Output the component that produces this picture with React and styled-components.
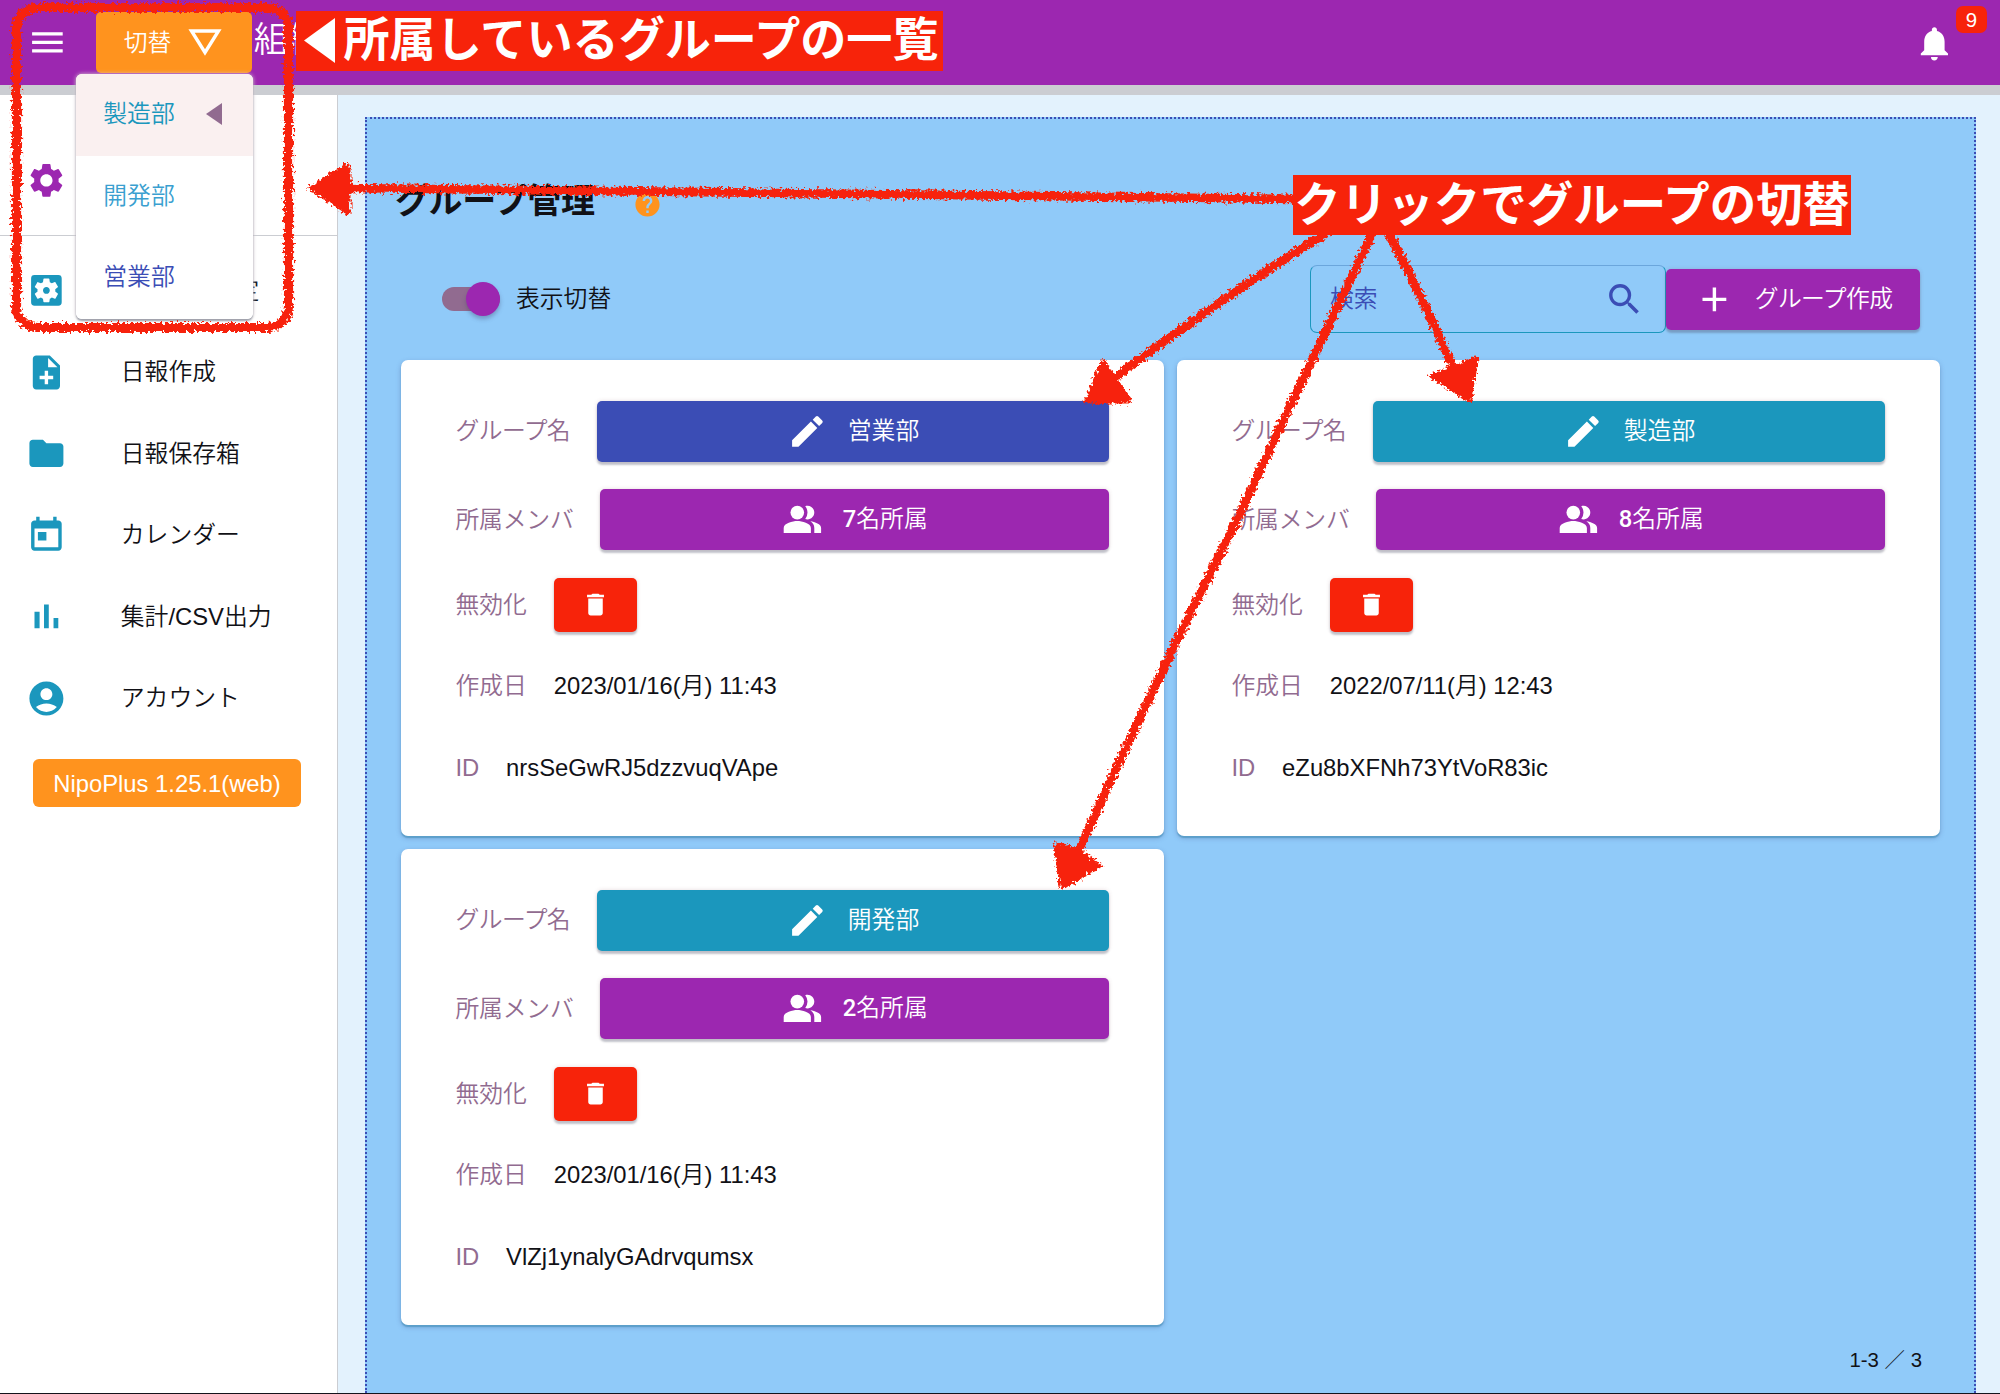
import React from "react";
import styled, { createGlobalStyle } from "styled-components";
import {
  MdMenu, MdSettings, MdSettingsApplications, MdNoteAdd, MdFolder,
  MdAccountCircle, MdNotifications, MdHelp, MdSearch, MdAdd, MdEdit, MdPeopleAlt, MdDelete,
} from "react-icons/md";

const c = {
  purple: "#9c27b0", orange: "#ff931e", teal: "#1b97bd", indigo: "#3b4db5",
  red: "#f7230a", mauve: "#916b90", panel: "#90caf9", pale: "#e3f2fd", ink: "#111116",
};

const Global = createGlobalStyle`
  * { box-sizing: border-box; }
  body {
    margin: 0;
    overflow: hidden;
    color: ${c.ink};
    font: 350 23.8px/1.5 "Liberation Sans", "Noto Sans CJK JP", sans-serif;
  }
`;

const Page = styled.div`
  position: relative;
  display: flex;
  flex-direction: column;
  width: 2000px;
  height: 1394px;
  overflow: hidden;
  border-bottom: 1.5px solid #14141c;
  background: ${c.pale};
`;

const Header = styled.header`
  position: relative;
  z-index: 2;
  display: flex;
  align-items: flex-start;
  flex: none;
  height: 85px;
  padding-left: 27px;
  background: ${c.purple};
  box-shadow: 0 10px 0 #cbcdd2;
  color: #fff;
`;

const MenuIcon = styled(MdMenu)`
  margin-top: 22px;
  font-size: 40.8px;
`;

const Switcher = styled.div`
  position: relative;
  margin-left: 28px;
`;

const SwitchButton = styled.div`
  display: flex;
  align-items: center;
  gap: 17px;
  width: 156px;
  height: 61px;
  margin-top: 12px;
  padding-left: 28px;
  border-radius: 5px;
  background: ${c.orange};

  svg { margin-top: -2px; }
`;

const GroupMenu = styled.div`
  position: absolute;
  top: 74px;
  right: -1px;
  width: 177px;
  overflow: hidden;
  border-radius: 6px;
  background: #fff;
  box-shadow: 0 2px 2px #9da0aa, 0 0 4px #d8cdd2;
`;

const GroupOption = styled.div`
  display: flex;
  align-items: center;
  gap: 31px;
  height: 81.5px;
  padding: 0 0 1px 27.5px;
  background: ${(p) => (p.$active ? "#faf0f0" : "#fff")};
  color: ${(p) => p.$color};
`;

const Title = styled.div`
  margin: 13px 0 0 2px;
  font-size: 35.7px;
  line-height: 54px;
`;

const BellArea = styled.div`
  display: flex;
  align-items: flex-start;
  gap: 1px;
  margin-left: auto;
  padding: 5.5px 13px 0 0;
`;

const Bell = styled(MdNotifications)`
  margin-top: 17px;
  font-size: 40.8px;
`;

const Badge = styled.span`
  width: 31px;
  height: 27px;
  border-radius: 7px;
  background: ${c.red};
  font-size: 20.4px;
  line-height: 28px;
  text-align: center;
`;

const Body = styled.div`
  display: flex;
  flex: 1;
  min-height: 0;
`;

const Sidebar = styled.nav`
  flex: none;
  width: 338px;
  border-right: 1.5px solid #cbcdd2;
  background: #fff;
`;

const SideTop = styled.div`
  height: 151px;
  padding: 75px 0 0 26px;
  border-bottom: 1.5px solid #cbcdd2;
  color: ${c.purple};
  font-size: 40.8px;
  line-height: 0;
`;

const SideList = styled.div`
  padding-top: 14px;
`;

const SideItem = styled.div`
  display: flex;
  align-items: center;
  height: 81.5px;
  padding-left: 26px;
  gap: ${(p) => (p.$indented ? "145px" : "54px")};

  svg {
    flex: none;
    color: ${c.teal};
    font-size: 40.8px;
  }
`;

const Version = styled.div`
  width: 268px;
  height: 48px;
  margin: 20px 0 0 33px;
  border-radius: 6px;
  background: ${c.orange};
  color: #fff;
  line-height: 49px;
  text-align: center;
`;

const Main = styled.main`
  display: flex;
  flex: 1;
  padding: 32px 26px 0 27px;
`;

const Panel = styled.section`
  display: flex;
  flex-direction: column;
  flex: 1;
  padding: 0 34px;
  border: 2px dotted ${c.indigo};
  border-bottom: 0;
  background: ${c.panel};
`;

const Heading = styled.h1`
  display: flex;
  align-items: center;
  gap: 38px;
  height: 60px;
  margin: 52px 0 0 -6px;
  font-size: 34px;
  font-weight: 700;
  letter-spacing: -0.4px;
`;

const Help = styled(MdHelp)`
  margin-top: 7px;
  color: ${c.orange};
  font-size: 29px;
`;

const Toolbar = styled.div`
  display: flex;
  align-items: center;
  height: 68px;
  margin-top: 34px;
  padding: 0 20px 0 41px;
`;

const Toggle = styled.div`
  display: flex;
  justify-content: flex-end;
  align-items: center;
  width: 58px;
  height: 24px;
  margin-right: 16px;
  border-radius: 12px;
  background: ${c.mauve};
`;

const Knob = styled.i`
  width: 34px;
  height: 34px;
  border-radius: 50%;
  background: ${c.purple};
  box-shadow: 0 3px 4px rgba(60, 60, 100, 0.35);
`;

const Search = styled.div`
  display: flex;
  align-items: center;
  justify-content: space-between;
  width: 356px;
  height: 68px;
  margin-left: auto;
  padding: 0 20px 0 19px;
  border: 1.5px solid ${c.teal};
  border-top-color: #6ba6dc;
  border-radius: 7px;
  color: ${c.indigo};

  svg { font-size: 40.8px; }
`;

const Button = styled.div`
  display: flex;
  align-items: center;
  justify-content: center;
  gap: 20.4px;
  flex: ${(p) => (p.$width ? "none" : 1)};
  width: ${(p) => p.$width || "auto"};
  height: ${(p) => p.$height || "61px"};
  border-radius: 5px;
  background: ${(p) => p.$color};
  box-shadow: 0 3px 2px rgba(70, 75, 100, 0.3), 0 0 4px rgba(120, 60, 80, 0.18);
  color: #fff;
  letter-spacing: ${(p) => p.$tracking || 0};
  white-space: nowrap;

  svg {
    flex: none;
    font-size: ${(p) => p.$icon || "40.8px"};
  }
`;

const Cards = styled.div`
  display: grid;
  grid-template-columns: 763px 763px;
  gap: 13px;
  margin-top: 27px;
`;

const Card = styled.article`
  height: 476px;
  padding: 27px 55px 26px 54.5px;
  border-radius: 7px;
  background: #fff;
  box-shadow: 0 2px 1px #5c9fca, 0 2px 5px rgba(70, 90, 150, 0.4);
`;

const Row = styled.div`
  display: flex;
  align-items: center;
  height: ${(p) => (p.$tall ? "88.4px" : "81.6px")};
`;

const Label = styled.span`
  flex: none;
  margin-right: 26.8px;
  color: ${c.mauve};
  letter-spacing: ${(p) => p.$tracking || 0};
`;

const Count = styled.b`
  font-family: Roboto, sans-serif;
  font-weight: 500;
`;

const Pager = styled.div`
  margin: auto 18px 17px auto;
  font-size: 20.4px;
`;

const Callout = styled.div`
  position: absolute;
  z-index: 5;
  top: ${(p) => p.$top}px;
  left: ${(p) => p.$left}px;
  display: flex;
  align-items: center;
  justify-content: center;
  width: ${(p) => p.$width}px;
  height: 60px;
  padding-bottom: 9px;
  background: ${c.red};
  color: #fff;
  font: 700 ${(p) => p.$size}px/51px "Noto Sans CJK JP", sans-serif;
  white-space: nowrap;
`;

const CalloutMark = styled.svg`
  flex: none;
  margin: 7px 8px 0 4px;
`;

const Sketch = styled.svg`
  position: absolute;
  z-index: 4;
  inset: 0;
  pointer-events: none;
`;

const TodayIcon = () => (
  <svg width="1em" height="1em" viewBox="0 0 24 24" fill="currentColor">
    <path d="M19 3.2h-1V1h-2v2.2H8V1H6v2.2H5c-1.11 0-1.99.9-1.99 2L3 19c0 1.1.89 2 2 2h14c1.1 0 2-.9 2-2V5.200c0-1.1-.9-2-2-2zm0 15.800H5V8h14v11zM7 10h5v5H7z" />
  </svg>
);

const ChartIcon = () => (
  <svg width="1em" height="1em" viewBox="0 0 24 24" fill="currentColor">
    <path d="M5 9.2h3V19H5zM10.6 5h2.8v14h-2.8zm5.6 8H19v6h-2.8z" />
  </svg>
);

const menuItems = [
  [MdSettingsApplications, "設定", true], [MdNoteAdd, "日報作成"], [MdFolder, "日報保存箱"],
  [TodayIcon, "カレンダー"], [ChartIcon, "集計/CSV出力"], [MdAccountCircle, "アカウント"],
];

const groups = [
  { name: "営業部", color: c.indigo, count: 7, date: "2023/01/16(月) 11:43", id: "nrsSeGwRJ5dzzvuqVApe" },
  { name: "製造部", color: c.teal, count: 8, date: "2022/07/11(月) 12:43", id: "eZu8bXFNh73YtVoR83ic" },
  { name: "開発部", color: c.teal, count: 2, date: "2023/01/16(月) 11:43", id: "VlZj1ynalyGAdrvqumsx" },
];

function GroupCard({ group }) {
  return (
    <Card>
      <Row $tall>
        <Label $tracking="-0.6px">グループ名</Label>
        <Button $color={group.color}><MdEdit />{group.name}</Button>
      </Row>
      <Row $tall>
        <Label $tracking="-0.2px">所属メンバ</Label>
        <Button $color={c.purple}><MdPeopleAlt /><span><Count>{group.count}</Count>名所属</span></Button>
      </Row>
      <Row>
        <Label>無効化</Label>
        <Button $color={c.red} $width="83px" $height="54px" $icon="29px"><MdDelete /></Button>
      </Row>
      <Row><Label>作成日</Label>{group.date}</Row>
      <Row><Label>ID</Label>{group.id}</Row>
    </Card>
  );
}

function Annotations() {
  return (
    <>
      <Sketch width="2000" height="1394" viewBox="0 0 2000 1394">
        <defs>
          <filter id="crayon" filterUnits="userSpaceOnUse" x="0" y="0" width="2000" height="1394">
            <feTurbulence type="fractalNoise" baseFrequency="0.35" numOctaves="2" seed="4" />
            <feDisplacementMap in="SourceGraphic" scale="9" xChannelSelector="R" yChannelSelector="G" />
          </filter>
        </defs>
        <g filter="url(#crayon)" fill={c.red} stroke={c.red} strokeLinejoin="round">
          <rect x="16.5" y="7.5" width="272" height="320" rx="21" fill="none" strokeWidth="9.2" />
          <g fill="none" strokeWidth="8.6">
            <path d="M1296 199L345 188" />
            <path d="M1328 232Q1230 292 1114 378" />
            <path d="M1388 232Q1422 296 1453 368" />
            <path d="M1373 232L1317 350L1280 427L1237 520L1177 640L1120 760L1079 850" />
          </g>
          <g strokeWidth="5">
            <path d="M311 188L348 165L348 213Z" />
            <path d="M1087 401L1103 362L1130 401Z" />
            <path d="M1469 400L1432 376L1476 359Z" />
            <path d="M1062 887L1056 845L1079 851L1099 866Z" />
          </g>
        </g>
      </Sketch>
      <Callout $left={296} $top={11} $width={647} $size={46.1}>
        <CalloutMark width="31" height="45" viewBox="0 0 31 45"><path d="M31 0V45L0 22.5Z" fill="#fff" /></CalloutMark>
        所属しているグループの一覧
      </Callout>
      <Callout $left={1292.5} $top={175} $width={558.5} $size={46.5}>クリックでグループの切替</Callout>
    </>
  );
}

export default function App() {
  return (
    <Page>
      <Global />
      <Header>
        <MenuIcon />
        <Switcher>
          <SwitchButton>
            切替
            <svg width="34" height="28" viewBox="0 0 34 28"><path d="M3.5 3H30.5L17 24.5Z" fill="none" stroke="#fff" strokeWidth="3.4" /></svg>
          </SwitchButton>
          <GroupMenu>
            <GroupOption $active $color={c.teal}>
              製造部
              <svg width="16" height="22" viewBox="0 0 16 22"><path d="M16 0V22L0 11Z" fill={c.mauve} /></svg>
            </GroupOption>
            <GroupOption $color="#3a9fd0">開発部</GroupOption>
            <GroupOption $color={c.indigo}>営業部</GroupOption>
          </GroupMenu>
        </Switcher>
        <Title>組織</Title>
        <BellArea><Bell /><Badge>9</Badge></BellArea>
      </Header>
      <Body>
        <Sidebar>
          <SideTop><MdSettings /></SideTop>
          <SideList>
            {menuItems.map(([Icon, label, indented]) => (
              <SideItem key={label} $indented={indented}><Icon />{label}</SideItem>
            ))}
          </SideList>
          <Version>NipoPlus 1.25.1(web)</Version>
        </Sidebar>
        <Main>
          <Panel>
            <Heading>グループ管理<Help /></Heading>
            <Toolbar>
              <Toggle><Knob /></Toggle>
              表示切替
              <Search>検索<MdSearch /></Search>
              <Button $color={c.purple} $width="254px" $tracking="-0.6px"><MdAdd />グループ作成</Button>
            </Toolbar>
            <Cards>{groups.map((g) => <GroupCard key={g.id} group={g} />)}</Cards>
            <Pager>1-3 ／ 3</Pager>
          </Panel>
        </Main>
      </Body>
      <Annotations />
    </Page>
  );
}
